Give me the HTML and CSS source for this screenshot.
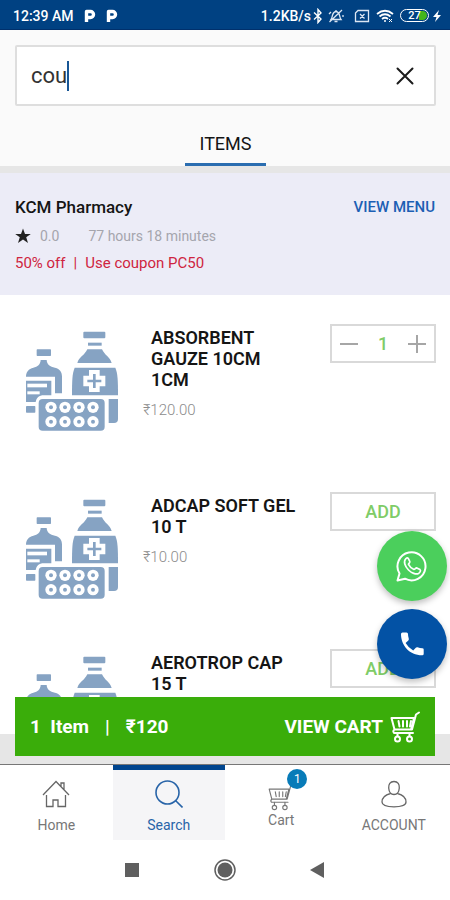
FILE: index.html
```html
<!DOCTYPE html>
<html lang="en">
<head>
<meta charset="utf-8">
<meta name="viewport" content="width=device-width, initial-scale=1">
<title>Pharmacy search</title>
<link rel="stylesheet" href="styles.css">
</head>
<body>
<svg class="sprite" aria-hidden="true">
  <symbol id="medicine" viewBox="69 60 300 306">
    <g fill="#86a3c3">
      <rect x="250" y="65" width="66" height="20" rx="3"/>
      <rect x="264" y="98" width="41" height="9"/>
      <path d="M262 118H306C314 136 330 141 335 159H232C237 141 254 136 262 118Z"/>
      <path d="M224 173H346C353 190 354 208 354 256H216C216 208 217 190 224 173Z"/>
      <path d="M326 267H354V327Q354 339 342 339H326Z"/>
      <rect x="110" y="118" width="43" height="20" rx="2"/>
      <path d="M122 150H140C141 164 150 170 165 173C180 177 186 186 186 200V250H165V200H78C78 186 86 176 100 173C113 170 121 164 122 150Z"/>
      <path d="M78 212H154V256H132C116 256 110 263 107 276H78Z"/>
      <rect x="78" y="288" width="28" height="20" rx="2"/>
      <rect x="116" y="267" width="198" height="95" rx="12"/>
    </g>
    <g fill="#fff">
      <path d="M267 180H299V197H316V229H299V246H267V229H250V197H267Z"/>
      <rect x="82" y="221" width="59" height="11"/>
      <rect x="82" y="244" width="37" height="9"/>
      <circle cx="153" cy="292" r="17"/><circle cx="195" cy="292" r="17"/><circle cx="237" cy="292" r="17"/><circle cx="279" cy="292" r="17"/>
      <circle cx="153" cy="335" r="17"/><circle cx="195" cy="335" r="17"/><circle cx="237" cy="335" r="17"/><circle cx="279" cy="335" r="17"/>
    </g>
    <g fill="#86a3c3">
      <path d="M279 192H287V209H304V217H287V234H279V217H262V209H279Z"/>
      <circle cx="153" cy="292" r="6"/><circle cx="195" cy="292" r="6"/><circle cx="237" cy="292" r="6"/><circle cx="279" cy="292" r="6"/>
      <circle cx="153" cy="335" r="6"/><circle cx="195" cy="335" r="6"/><circle cx="237" cy="335" r="6"/><circle cx="279" cy="335" r="6"/>
    </g>
  </symbol>
  <symbol id="trolley" viewBox="0 0 30 32">
    <g fill="none" stroke="currentColor" stroke-linejoin="round" stroke-linecap="round">
      <path d="M24 7H1.500L4.500 18.500H22L26 3.500L29 1.500M24 7L21 18.500M4.500 18.500Q2.500 20 4 22H23"/>
      <path d="M8.500 10L9.500 15.500M13 10V15.500M17 10V15.500M21 10L20 15.500"/>
      <circle cx="7.500" cy="28" r="2.500"/><circle cx="19.500" cy="28" r="2.500"/>
      <path d="M7.500 25V22M19.500 25V22"/>
    </g>
  </symbol>
  <symbol id="paytm" viewBox="0 0 12 14">
    <path d="M2.500 13V2.500H6.500A3 3 0 0 1 6.500 8.500H4" fill="none" stroke="#fff" stroke-width="3.400" stroke-linejoin="round"/>
  </symbol>
</svg>

<div class="app">
  <div class="status">
    <span class="clock">12:39 AM</span>
    <svg class="notice" width="12" height="14"><use href="#paytm"/></svg>
    <svg class="notice" width="12" height="14"><use href="#paytm"/></svg>
    <span class="rate">1.2KB/s</span>
    <svg width="10" height="16" viewBox="0 0 10 16" fill="none" stroke="#fff" stroke-width="1.400"><path d="M1 4.500L8 11L5 14.500V1.500L8 5L1 11.500"/></svg>
    <svg class="bell" width="16" height="16" viewBox="0 0 16 16" fill="none" stroke="#dbe6f3" stroke-width="1.300"><path d="M3 11.500C5 9 3.500 4 8 3.500C12.500 4 11 9 13 11.500ZM6.500 13.500H9.500M8 3.500V2M1.500 14L14 2M1 6L3 4M15 7V9"/></svg>
    <svg class="sim" width="16" height="14" viewBox="0 0 16 14" fill="none" stroke="#dbe6f3" stroke-width="1.300"><path d="M4 1.500H14.500V12.500H1.500V4ZM6 5L10.500 9.500M10.500 5L6 9.500"/></svg>
    <svg class="wifi" width="18" height="14" viewBox="0 0 18 14" fill="none" stroke="#fff" stroke-width="1.700"><path d="M1 5Q9-1.500 17 5M3.500 7.500Q9 3 14.500 7.500M6 10Q9 7.500 12 10"/><circle cx="9" cy="12" r="1" fill="#fff" stroke="none"/><path d="M13 10L16 13M16 10L13 13" stroke-width="1"/></svg>
    <span class="battery"><span class="charge">27</span></span>
    <svg class="bolt" width="8" height="14" viewBox="0 0 8 14"><path d="M6 1L0 8H3.500L2 13L8 6H4.500Z" fill="#fff"/></svg>
  </div>

  <header class="top">
    <div class="search-box">
      <input class="search-input" type="text" value="cou" aria-label="Search items">
      <span class="caret"></span>
      <button class="clear" type="button" aria-label="Clear search">
        <svg width="18" height="18" viewBox="0 0 18 18" stroke="#1b1b1b" stroke-width="2" stroke-linecap="round"><path d="M1.500 1.500L16.500 16.500M16.500 1.500L1.500 16.500"/></svg>
      </button>
    </div>
    <div class="tabs"><button class="tab" type="button">ITEMS</button></div>
  </header>

  <main class="content">
    <div class="scroll">
      <section class="store">
        <div class="store-row">
          <h1 class="store-name">KCM Pharmacy</h1>
          <a class="view-menu" href="#menu">VIEW MENU</a>
        </div>
        <div class="meta">
          <svg width="16" height="16" viewBox="0 0 16 16"><path d="M8 .5L10 6H15.800L11.200 9.300L13 15L8 11.600L3 15L4.800 9.300L.2 6H6Z" fill="#222"/></svg>
          <span>0.0</span>
          <span class="time">77 hours 18 minutes</span>
        </div>
        <p class="offer"><span>50% off</span><span>|</span><span>Use coupon PC50</span></p>
      </section>

      <article class="item">
        <svg class="pic" width="100" height="102" role="img" aria-label="Medicines"><use href="#medicine"/></svg>
        <div class="info">
          <h2 class="title">ABSORBENT GAUZE 10CM 1CM</h2>
          <p class="price">₹120.00</p>
        </div>
        <div class="control stepper">
          <button class="step" type="button" aria-label="Remove one"><svg width="18" height="18" viewBox="0 0 18 18" stroke="#a6a6a6" stroke-width="2"><path d="M0 9H18"/></svg></button>
          <span class="count">1</span>
          <button class="step" type="button" aria-label="Add one"><svg width="18" height="18" viewBox="0 0 18 18" stroke="#a6a6a6" stroke-width="2"><path d="M0 9H18M9 0V18"/></svg></button>
        </div>
      </article>

      <article class="item">
        <svg class="pic" width="100" height="102" role="img" aria-label="Medicines"><use href="#medicine"/></svg>
        <div class="info">
          <h2 class="title">ADCAP SOFT GEL 10 T</h2>
          <p class="price">₹10.00</p>
        </div>
        <button class="control add" type="button">ADD</button>
      </article>

      <article class="item">
        <svg class="pic" width="100" height="102" role="img" aria-label="Medicines"><use href="#medicine"/></svg>
        <div class="info">
          <h2 class="title">AEROTROP CAP 15 T</h2>
        </div>
        <button class="control add" type="button">ADD</button>
      </article>
    </div>

    <div class="fabs">
      <button class="fab whatsapp" type="button" aria-label="WhatsApp">
        <svg width="32" height="32" viewBox="0 0 32 32"><path d="M1.500 30.500L3.500 23.500A14 14 0 1 1 9 28.700Z" fill="none" stroke="#fff" stroke-width="2" stroke-linejoin="round"/><path d="M10 8.500C11 7.500 12 7.700 12.500 8.800L13.800 11.500C14.200 12.800 12.500 13.500 12.500 14.300C13.800 16.800 15.500 18.500 18 19.500C19 19.500 19.800 17.500 20.800 17.900L24 19.600C25.200 20.400 24 22.500 22.500 23.500C20 24.800 15.500 23 12.500 20C9 16.500 7 11.500 10 8.500Z" fill="none" stroke="#fff" stroke-width="1.700"/></svg>
      </button>
      <button class="fab phone" type="button" aria-label="Call">
        <svg width="24" height="24" viewBox="0 0 24 24"><path d="M1 2Q1 .5 2.500 .5H6.500Q8 .5 8 2Q8 4.500 8.800 6.700Q9 7.700 8.300 8.500L5.600 11Q8.500 16 13.200 18.400L15.800 15.800Q16.500 15 17.500 15.300Q20 16.200 22.300 16.200Q23.700 16.200 23.700 17.600V21.800Q23.700 23.300 22.300 23.300C9 23.300 1 13 1 2Z" fill="#fff"/></svg>
      </button>
    </div>

    <a class="cart-bar" href="#cart">
      <span>1&nbsp; Item</span><span class="bar">|</span><span>₹120</span>
      <span class="view-cart">VIEW CART</span>
      <svg class="trolley-bold" width="30" height="32"><use href="#trolley"/></svg>
    </a>
  </main>

  <nav class="tabbar">
    <a class="tab-link" href="#home">
      <svg width="28" height="28" viewBox="0 0 28 28" fill="none" stroke="#666" stroke-width="1.300"><path d="M1 15L14 1.500L27 15M19 6.500V3H22V9.500M4.500 15V26.500H11V20H16V26.500H23.500V15"/></svg>
      <span>Home</span>
    </a>
    <a class="tab-link active" href="#search" aria-current="page">
      <svg width="28" height="28" viewBox="0 0 28 28" fill="none" stroke="#2864a8" stroke-width="1.600"><circle cx="12.500" cy="12.500" r="11.500"/><path d="M20.500 20.500L27.500 27.500"/></svg>
      <span>Search</span>
    </a>
    <a class="tab-link cart-link" href="#cart">
      <span class="cart-icon"><svg class="trolley-thin" width="28" height="28"><use href="#trolley"/></svg><span class="badge">1</span></span>
      <span>Cart</span>
    </a>
    <a class="tab-link" href="#account">
      <svg width="28" height="28" viewBox="0 0 28 28" fill="none" stroke="#666" stroke-width="1.300"><path d="M14 1.500C18 1.500 19.500 4.500 19.300 8C19 12 17 14.500 14 14.500C11 14.500 9 12 8.700 8C8.500 4.500 10 1.500 14 1.500ZM10.500 13.500C5 15 2 17.500 2 22C2 25.500 7 26.800 14 26.800C21 26.800 26 25.500 26 22C26 17.500 23 15 17.500 13.500"/></svg>
      <span>ACCOUNT</span>
    </a>
  </nav>

  <div class="system">
    <button class="sys" type="button" aria-label="Recent apps"><svg width="24" height="24" viewBox="0 0 24 24"><rect x="5" y="5" width="14" height="14" fill="#5f5f5f"/></svg></button>
    <button class="sys" type="button" aria-label="Home screen"><svg width="24" height="24" viewBox="0 0 24 24"><circle cx="12" cy="12" r="10" fill="none" stroke="#5f5f5f" stroke-width="1.500"/><circle cx="12" cy="12" r="7.500" fill="#5f5f5f"/></svg></button>
    <button class="sys" type="button" aria-label="Back"><svg width="24" height="24" viewBox="0 0 24 24"><path d="M4 12L18 4V20Z" fill="#5f5f5f"/></svg></button>
  </div>
</div>
</body>
</html>
```
FILE: styles.css
```css
* {
  box-sizing: border-box;
}

body {
  margin: 0;
  font-family: Roboto, "Noto Sans", sans-serif;
  color: #151515;
  background: #fff;
}

h1, h2, p {
  margin: 0;
}

button {
  padding: 0;
  border: 0;
  background: none;
  font: inherit;
}

a {
  text-decoration: none;
}

svg {
  display: block;
  flex: none;
}

.sprite {
  position: absolute;
  width: 0;
  height: 0;
}

.app {
  display: flex;
  flex-direction: column;
  height: 100vh;
  overflow: hidden;
}

/* Device status bar */
.status {
  display: flex;
  align-items: center;
  flex: none;
  height: 30px;
  padding: 2px 9px 0 13px;
  background: #004182;
  border-bottom: 1px solid #00306c;
  color: #fff;
  font-size: 14px;
  font-weight: 500;
}

.notice {
  margin-left: 10px;
}

.rate {
  margin-left: auto;
  margin-right: 2px;
}

.bell {
  margin-left: 5px;
}

.sim {
  margin-left: 10px;
}

.wifi {
  margin: 0 6px;
}

.battery {
  width: 29px;
  height: 13px;
  padding: 1px;
  border: 1px solid #fff;
  border-radius: 7px;
}

.charge {
  display: block;
  height: 9px;
  border-radius: 5px;
  background: linear-gradient(90deg, transparent 68%, #43b51b 68%);
  font-size: 11px;
  line-height: 9px;
  text-align: center;
}

.bolt {
  margin-left: 4px;
}

/* Search */
.top {
  flex: none;
  padding: 15px 14px 0 15px;
  background: #fafafa;
  border-bottom: 7px solid #e6e6e6;
}

.search-box {
  display: flex;
  align-items: center;
  height: 61px;
  padding: 0 20px 0 14px;
  background: #fff;
  border: 2px solid #dedede;
  border-radius: 2px;
}

.search-input {
  field-sizing: content;
  padding: 0;
  border: 0;
  outline: 0;
  background: none;
  color: #333;
  font-family: inherit;
  font-size: 22px;
}

.caret {
  width: 2px;
  height: 30px;
  background: #185695;
}

.clear {
  margin-left: auto;
}

.tabs {
  display: flex;
  justify-content: center;
  padding-top: 17px;
}

.tab {
  height: 43px;
  padding: 0 14px;
  border-bottom: 3px solid #2a6db0;
  color: #151515;
  font-size: 18px;
}

/* Scrolling results */
.content {
  position: relative;
  flex: 1;
  min-height: 0;
  padding-bottom: 30px;
  background: #e6e6e6;
}

.scroll {
  height: 100%;
  overflow: hidden;
  background: #fff;
}

.store {
  height: 122px;
  padding: 22px 15px 0;
  background: #ececf7;
}

.store-row {
  display: flex;
  justify-content: space-between;
  line-height: 24px;
}

.store-name {
  font-size: 17px;
  font-weight: 500;
}

.view-menu {
  color: #1c5fb4;
  font-size: 15px;
  font-weight: 500;
}

.meta {
  display: flex;
  align-items: center;
  gap: 9px;
  margin-top: 5px;
  color: #a5a5ad;
  font-size: 14px;
  line-height: 24px;
}

.time {
  margin-left: 20px;
}

.offer {
  display: flex;
  gap: 8px;
  margin-top: 3px;
  color: #cf2440;
  font-size: 15px;
  line-height: 24px;
}

.item {
  display: grid;
  grid-template-columns: 100px minmax(0, 1fr) 106px;
  column-gap: 20px;
  align-items: start;
  padding: 29px 14px 20px 23px;
}

.pic {
  margin-top: 6px;
}

.info {
  padding-bottom: 22px;
}

.title {
  margin: 3px 12px 0 8px;
  font-size: 18px;
  font-weight: 600;
  line-height: 21px;
}

.price {
  margin-top: 10px;
  color: #8c8c8c;
  font-size: 15px;
  font-weight: 300;
  line-height: 21px;
}

.control {
  width: 106px;
  height: 39px;
  border: 2px solid #d9d9d9;
  background: #fff;
}

.stepper {
  display: flex;
  align-items: center;
  justify-content: space-between;
  padding: 0 8px;
}

.count, .add {
  color: #80cc67;
  font-size: 18px;
  font-weight: 500;
}

/* Floating actions */
.fabs {
  position: absolute;
  right: 3px;
  bottom: 85px;
  display: grid;
  gap: 8px;
}

.fab {
  display: grid;
  place-items: center;
  width: 70px;
  height: 70px;
  border-radius: 50%;
  box-shadow: 0 3px 6px rgba(0, 0, 0, 0.25);
}

.whatsapp {
  background: #4bcf5c;
}

.phone {
  background: #0352a5;
}

.cart-bar {
  position: absolute;
  right: 15px;
  bottom: 8px;
  left: 15px;
  display: flex;
  align-items: center;
  height: 59px;
  padding: 0 15px;
  background: #3aad0a;
  color: #fff;
  font-size: 19px;
  font-weight: 700;
}

.bar {
  margin: 0 16px;
  font-weight: 500;
}

.view-cart {
  margin-left: auto;
  margin-right: 7px;
}

.trolley-bold {
  stroke-width: 2px;
}

.trolley-thin {
  stroke-width: 1.3px;
}

/* Bottom navigation */
.tabbar {
  display: grid;
  grid-template-columns: repeat(4, 1fr);
  flex: none;
  height: 76px;
  border-top: 1px solid #777;
}

.tab-link {
  display: flex;
  flex-direction: column;
  align-items: center;
  gap: 8px;
  padding-top: 15px;
  color: #777;
  font-size: 14px;
  line-height: 18px;
}

.active {
  padding-top: 10px;
  border-top: 5px solid #00458e;
  background: #f5f5f7;
  color: #2864a8;
}

.cart-link {
  gap: 0;
  padding-top: 18px;
}

.cart-icon {
  position: relative;
}

.badge {
  position: absolute;
  top: -14px;
  right: -12px;
  width: 20px;
  height: 20px;
  border-radius: 50%;
  background: #087bb8;
  color: #fff;
  font-size: 12px;
  line-height: 20px;
  text-align: center;
}

/* Device navigation */
.system {
  display: flex;
  justify-content: center;
  align-items: center;
  flex: none;
  gap: 69px;
  height: 60px;
}
```
